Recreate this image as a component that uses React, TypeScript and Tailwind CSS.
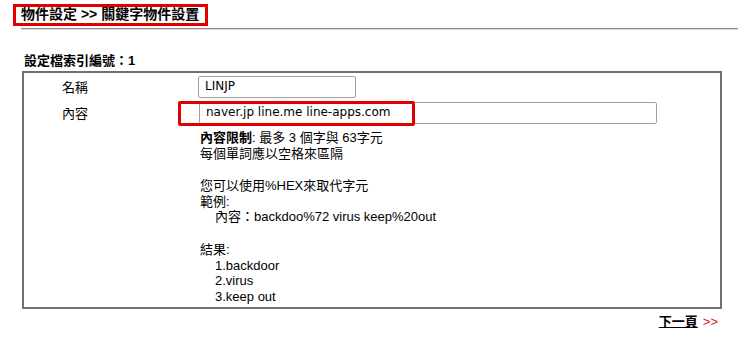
import React from 'react';

const font = "font-['Liberation_Sans','Noto_Sans_CJK_TC',sans-serif]";

const App: React.FC = () => {
  return (
    <div className={`w-[738px] h-[338px] bg-white text-black ${font} text-[13px] leading-[15.7px]`}>
      {/* Page title */}
      <div className="pl-[13px] pt-[4px]">
        <div className="inline-flex items-center h-[22px] w-[195px] border-[3px] border-[#e00000] pl-[5px] text-[14px] font-bold">
          物件設定 &gt;&gt; 關鍵字物件設置
        </div>
      </div>
      <div className="ml-[21px] mt-[2px] h-px bg-[#8a8a8a] shadow-[0_1px_0_#e8d8d8]" />

      {/* Profile index */}
      <div className="pl-[24px] mt-[25px] font-bold text-[13px] leading-[14px]">設定檔索引編號：1</div>

      {/* Settings box */}
      <div className="ml-[22px] mt-[3px] w-[700px] h-[238px] border-2 border-[#707070]">
        <div className="grid grid-cols-[174px_1fr] pt-[3px]">
          <div className="pl-[38px] pt-[4px]">名稱</div>
          <div>
            <div className="w-[158px] h-[22px] border border-[#a0a0a0] rounded-[2px] pl-[6px] flex items-center font-['DejaVu_Sans','Noto_Sans_CJK_TC',sans-serif] text-[12px]">
              LINJP
            </div>
          </div>

          <div className="pl-[38px] pt-[8px]">內容</div>
          <div className="pl-[1px] pt-[4px]">
            <div className="relative w-[458px] h-[22px] border border-[#a0a0a0] rounded-[2px] pl-[6px] flex items-center font-['DejaVu_Sans','Noto_Sans_CJK_TC',sans-serif] text-[12px]">
              naver.jp line.me line-apps.com
              <div className="absolute left-[-22px] top-[-2px] w-[237px] h-[25px] border-[3px] border-[#e00000] rounded-[2px]" />
            </div>
            <div className="pt-[6px] pl-[1px]">
              <div>
                <span className="font-bold">內容限制</span>: 最多 3 個字與 63字元
              </div>
              <div>每個單詞應以空格來區隔</div>
              <div className="h-[16.5px]" />
              <div>您可以使用%HEX來取代字元</div>
              <div>範例:</div>
              <div className="pl-[15px]">內容：backdoo%72 virus keep%20out</div>
              <div className="h-[17px]" />
              <div>結果:</div>
              <div className="pl-[15px]">1.backdoor</div>
              <div className="pl-[15px]">2.virus</div>
              <div className="pl-[15px]">3.keep out</div>
            </div>
          </div>
        </div>
      </div>

      {/* Next page */}
      <div className="flex justify-end pr-[20px] mt-[5px] text-[13px]">
        <span className="font-bold underline">下一頁</span>
        <span className="ml-[5px] text-[#d02020]">&gt;&gt;</span>
      </div>
    </div>
  );
};

export default App;
